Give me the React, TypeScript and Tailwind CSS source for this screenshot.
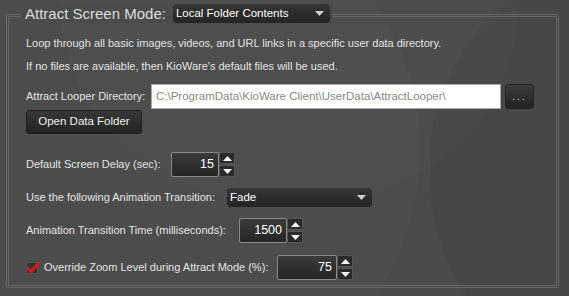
import React from 'react';

const font = { fontFamily: '"Liberation Sans", Arial, sans-serif' };

function Arrow({ up = false }: { up?: boolean }) {
  return (
    <svg width="9" height="5" viewBox="0 0 9 5" className="block">
      {up ? <path d="M0 5 L4.5 0 L9 5 Z" fill="#f2f2f2" /> : <path d="M0 0 L4.5 5 L9 0 Z" fill="#f2f2f2" />}
    </svg>
  );
}

function Spin({ value, w }: { value: string; w: string }) {
  return (
    <div className="flex h-[25px]">
      <div
        className={`${w} h-full rounded-[2px] border border-[#8a8a8a] bg-gradient-to-b from-[#3a3a3a] to-[#262626] flex items-center justify-end pr-[4px] text-[12.5px] text-white`}
      >
        {value}
      </div>
      <div className="w-[16px] h-full flex flex-col gap-[1px]">
        <div className="flex-1 bg-[#2a2a2a] border border-[#555] flex items-center justify-center">
          <Arrow up />
        </div>
        <div className="flex-1 bg-[#2a2a2a] border border-[#555] flex items-center justify-center">
          <Arrow />
        </div>
      </div>
    </div>
  );
}

function Select({ label, w }: { label: string; w: string }) {
  return (
    <div
      className={`${w} h-[19px] rounded-[4px] bg-gradient-to-b from-[#353535] to-[#242424] flex items-center justify-between pl-[3px] pr-[6px] text-white text-[11.5px]`}
    >
      <span>{label}</span>
      <svg width="9" height="5" viewBox="0 0 9 5">
        <path d="M0 0 L4.5 5 L9 0 Z" fill="#cfcfcf" />
      </svg>
    </div>
  );
}

export default function App() {
  return (
    <div className="relative w-[569px] h-[296px] overflow-hidden bg-[#4a4a4a] text-[#e4e4e4] text-[11px]" style={font}>
      {/* faint background arcs */}
      <div className="absolute -left-[120px] -top-[120px] w-[540px] h-[540px] rounded-full bg-white/[0.012]" />
      <div className="absolute left-[60px] -top-[200px] w-[460px] h-[400px] rounded-full bg-white/[0.012]" />
      <div className="absolute left-[430px] -top-[40px] w-[400px] h-[420px] rounded-full bg-black/[0.04]" />

      <div className="relative pt-[4px]">
        {/* title row */}
        <div className="relative z-10 flex items-center h-[19px] pl-[6px]">
          <div className="w-[15px]" />
          <div className="flex items-center bg-[#4b4b4b] pl-[4px] pr-[3px] h-full">
            <span className="text-[15px] leading-none text-[#dcdcdc] mr-[7px]">Attract Screen Mode:</span>
            <Select label="Local Folder Contents" w="w-[157px]" />
          </div>
        </div>

        {/* group box */}
        <div className="-mt-[9px] ml-[6px] w-[553px] h-[274px] rounded-[3px] border-[3px] border-double border-[#666] pl-[17px] pt-[15px]">
          <div className="h-[23px] leading-[23px]">Loop through all basic images, videos, and URL links in a specific user data directory.</div>
          <div className="h-[23px] leading-[23px]">If no files are available, then KioWare's default files will be used.</div>

          <div className="flex items-center mt-[6px] h-[25px]">
            <span className="w-[125px]">Attract Looper Directory:</span>
            <div className="w-[350px] h-[25px] bg-white border border-[#aaa] text-[#8a8a8a] text-[11.5px] flex items-center pl-[4px]">
              C:\ProgramData\KioWare Client\UserData\AttractLooper\
            </div>
            <div className="ml-[4px] w-[29px] h-[25px] rounded-[3px] bg-gradient-to-b from-[#3c3c3c] to-[#232323] border border-[#222] flex items-center justify-center text-[#d8d8d8] tracking-[2px] text-[10px]">
              ...
            </div>
          </div>

          <div className="mt-[1px] w-[116px] h-[24px] rounded-[3px] bg-gradient-to-b from-[#383838] to-[#222] border border-[#1e1e1e] flex items-center justify-center text-[11.5px] text-[#eee]">
            Open Data Folder
          </div>

          <div className="flex items-center mt-[18px]">
            <span className="w-[145px]">Default Screen Delay (sec):</span>
            <Spin value="15" w="w-[48px]" />
          </div>

          <div className="flex items-center mt-[11px]">
            <span className="w-[201px]">Use the following Animation Transition:</span>
            <Select label="Fade" w="w-[145px]" />
          </div>

          <div className="flex items-center mt-[11px]">
            <span className="w-[213px]">Animation Transition Time (milliseconds):</span>
            <Spin value="1500" w="w-[48px]" />
          </div>

          <div className="flex items-center mt-[12px]">
            <div className="relative w-[12px] h-[12px] rounded-[2px] bg-[#333] border border-[#555]">
              <svg width="14" height="13" viewBox="0 0 14 13" className="absolute -left-[1px] -top-[2px]">
                <path d="M1 6.5 L5 10.5 L13 1.5" stroke="#d11a1a" strokeWidth="3" fill="none" />
              </svg>
            </div>
            <span className="ml-[6px] w-[233px]">Override Zoom Level during Attract Mode (%):</span>
            <Spin value="75" w="w-[60px]" />
          </div>
        </div>
      </div>
    </div>
  );
}
